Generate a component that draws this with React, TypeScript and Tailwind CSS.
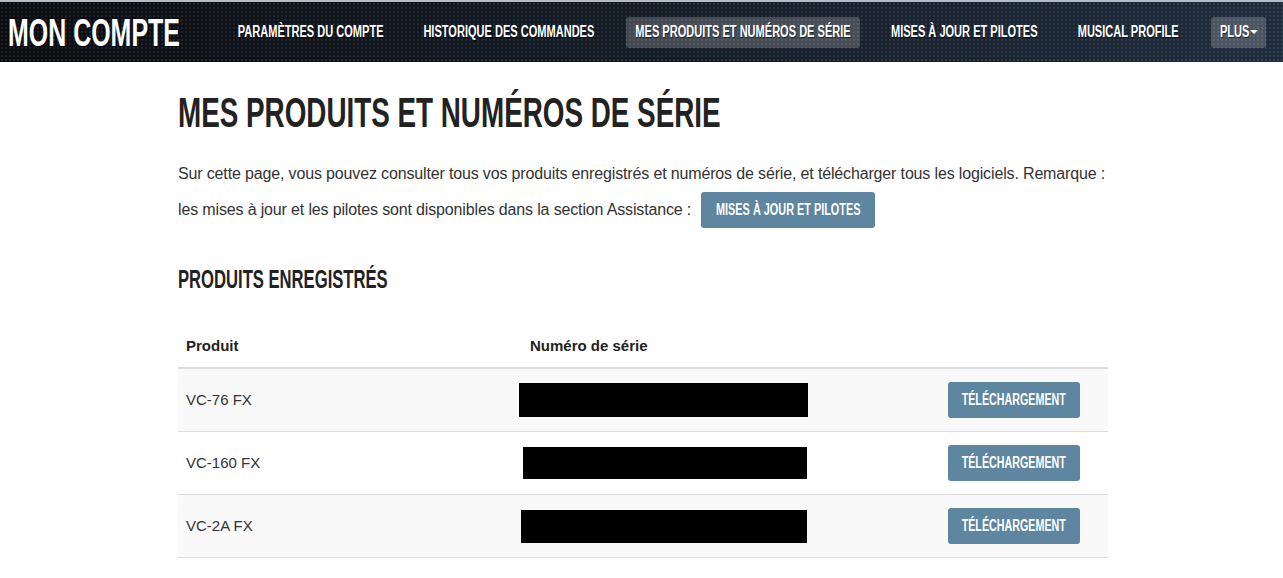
import React from 'react';

const sans = "font-['Liberation_Sans',Arial,sans-serif]";

// texte condensé : la police n'existe pas ici, on resserre Liberation Sans Bold
const Squeeze: React.FC<{ className: string; children: React.ReactNode }> = ({ className, children }) => (
  <span className={`inline-block whitespace-nowrap font-bold ${className}`}>{children}</span>
);

const navItems = [
  { label: 'PARAMÈTRES DU COMPTE', w: 'w-[162px]' },
  { label: 'HISTORIQUE DES COMMANDES', w: 'w-[188px]' },
  { label: 'MES PRODUITS ET NUMÉROS DE SÉRIE', w: 'w-[234px]', active: true },
  { label: 'MISES À JOUR ET PILOTES', w: 'w-[162px]' },
  { label: 'MUSICAL PROFILE', w: 'w-[120px]' },
];

const products = [
  { name: 'VC-76 FX', mask: 'ml-[-3px] w-[289px] h-[34px]' },
  { name: 'VC-160 FX', mask: 'ml-[1px] w-[284px] h-[32px]' },
  { name: 'VC-2A FX', mask: 'ml-[-1px] w-[286px] h-[33px]' },
];

export default function App() {
  return (
    <div className={`min-h-[578px] bg-white text-[#333] ${sans}`}>
      <header className="h-[62px] border-t-2 border-[#b4bcc6] bg-[image:radial-gradient(rgba(255,255,255,0.09)_1px,transparent_1.2px),linear-gradient(90deg,#0a0c10_0%,#131a24_45%,#1f2c3c_100%)] bg-[length:4px_4px,100%_100%] flex items-center">
        <div className="ml-[8px] w-[172px] h-[44px] flex items-center">
          <Squeeze className="text-[39px] leading-none text-white origin-left scale-x-[0.64] [text-shadow:1px_1px_0_rgba(0,0,0,0.7)]">
            MON COMPTE
          </Squeeze>
        </div>
        <nav className="ml-[50px] flex items-center gap-[23px]">
          {navItems.map(item => (
            <a
              key={item.label}
              className={`${item.w} h-[31px] flex items-center justify-center rounded-[3px] ${item.active ? 'bg-white/20' : ''}`}
            >
              <Squeeze className="text-[16px] leading-none text-white scale-x-[0.69] [text-shadow:1px_1px_0_rgba(0,0,0,0.5)]">
                {item.label}
              </Squeeze>
            </a>
          ))}
          <a className="w-[55px] h-[31px] pl-[9px] flex items-center rounded-[3px] bg-white/20">
            <span className="w-[29px] h-[16px] flex items-center">
              <Squeeze className="text-[16px] leading-none text-white origin-left scale-x-[0.69] [text-shadow:1px_1px_0_rgba(0,0,0,0.5)]">PLUS</Squeeze>
            </span>
            <span className="ml-[1px] w-0 h-0 border-x-[4px] border-x-transparent border-t-[4px] border-t-white" />
          </a>
        </nav>
      </header>

      <main className="w-[930px] ml-[178px] pt-[26px]">
        <h2 className="h-[48px] flex items-center">
          <Squeeze className="text-[43px] leading-[48px] text-[#222] origin-left scale-x-[0.647]">
            MES PRODUITS ET NUMÉROS DE SÉRIE
          </Squeeze>
        </h2>

        <div className="mt-[19px] text-[16px] tracking-[-0.15px]">
          <p className="h-[37px] leading-[37px] whitespace-nowrap">
            Sur cette page, vous pouvez consulter tous vos produits enregistrés et numéros de série, et télécharger tous les logiciels. Remarque :
          </p>
          <p className="h-[36px] flex items-center gap-[10px] whitespace-nowrap">
            <span>les mises à jour et les pilotes sont disponibles dans la section Assistance :</span>
            <a className="w-[174px] h-[36px] flex items-center justify-center rounded-[3px] bg-[#5e86a0] tracking-normal">
              <Squeeze className="text-[16px] leading-none text-white scale-x-[0.68]">MISES À JOUR ET PILOTES</Squeeze>
            </a>
          </p>
        </div>

        <h3 className="mt-[36px] h-[30px] flex items-center">
          <Squeeze className="text-[25px] leading-[30px] text-[#222] origin-left scale-x-[0.665]">PRODUITS ENREGISTRÉS</Squeeze>
        </h3>

        <div className="mt-[32px] text-[15px]">
          <div className="flex items-center h-[43px] border-b-2 border-[#ddd] font-bold text-[#222]">
            <div className="w-[344px] px-2">Produit</div>
            <div className="px-2">Numéro de série</div>
          </div>
          {products.map((p, i) => (
            <div
              key={p.name}
              className={`flex items-center h-[63px] border-b border-[#ddd] ${i % 2 === 0 ? 'bg-[#f9f9f9]' : 'bg-white'}`}
            >
              <div className="w-[344px] px-2">{p.name}</div>
              <div className="w-[426px]">
                <div className={`bg-black ${p.mask}`} />
              </div>
              <button className="w-[132px] h-[36px] flex items-center justify-center rounded-[3px] bg-[#5e86a0]">
                <Squeeze className="text-[16px] leading-none text-white scale-x-[0.67]">TÉLÉCHARGEMENT</Squeeze>
              </button>
            </div>
          ))}
        </div>
      </main>
    </div>
  );
}
